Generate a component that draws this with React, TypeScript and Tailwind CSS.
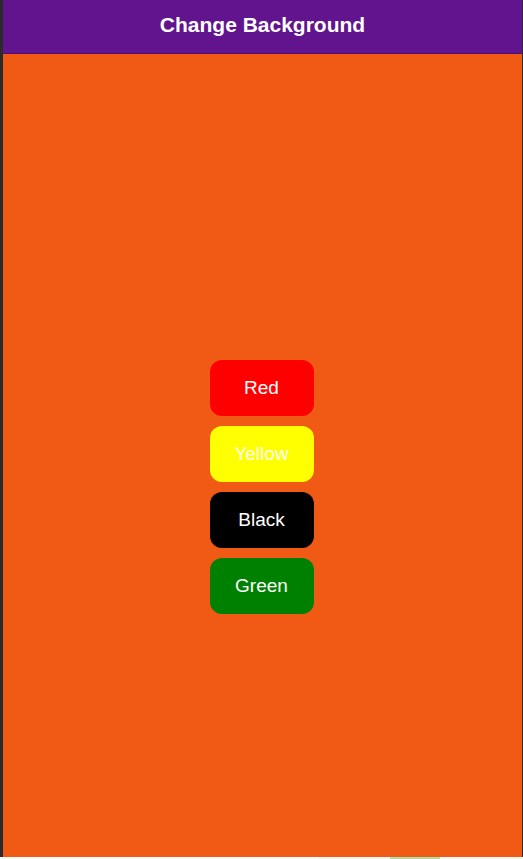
export default function App() {
    const colors = [
        { name: "Red", bg: "bg-[#ff0000]" },
        { name: "Yellow", bg: "bg-[#ffff00]" },
        { name: "Black", bg: "bg-black" },
        { name: "Green", bg: "bg-[#008000]" },
    ];

    return (
        <div className="w-[523px] h-[859px] flex flex-col bg-[#2a2a2a] font-['Liberation_Sans',Arial,sans-serif] overflow-hidden">
            <div className="flex flex-1 min-h-0">
                <div className="w-[3px] bg-[#2a2a2a]" />
                <div className="flex-1 flex flex-col">
                    {/* Header */}
                    <div className="h-[53px] bg-[#61148d] flex items-center justify-center pb-[3px]">
                        <h1 className="text-white text-[21px] font-bold">Change Background</h1>
                    </div>
                    <div className="h-px bg-[#4b0f6e]" />
                    {/* Body */}
                    <div className="flex-1 bg-[#f05a15] flex flex-col items-center pt-[306px] pr-[2px] gap-[10px]">
                        {colors.map((c) => (
                            <button
                                key={c.name}
                                className={`w-[104px] h-[56px] rounded-[12px] ${c.bg} text-white text-[19px] flex items-center justify-center`}
                            >
                                {c.name}
                            </button>
                        ))}
                    </div>
                </div>
                <div className="w-px bg-[#2a2a2a]" />
            </div>
            <div className="h-[2px] flex bg-[#f2f2f2]">
                <div className="w-[319px] bg-[#fafafa]" />
                <div className="w-[71px] bg-[#f4f4f4]" />
                <div className="w-[50px] bg-[#b3dba5]" />
                <div className="flex-1 bg-[#f7f7f7]" />
            </div>
        </div>
    );
}
